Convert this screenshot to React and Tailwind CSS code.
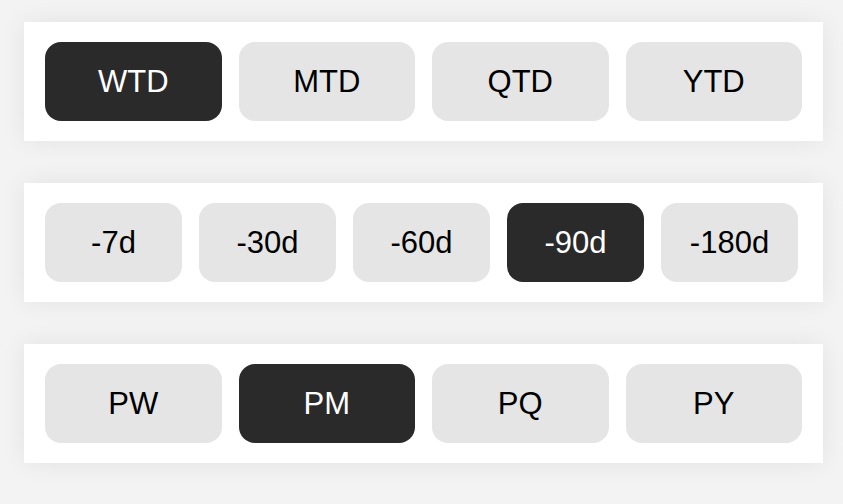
import { useState } from 'react';

const grupos = [
  { opciones: ['WTD', 'MTD', 'QTD', 'YTD'], activo: 'WTD', fijo: false },
  { opciones: ['-7d', '-30d', '-60d', '-90d', '-180d'], activo: '-90d', fijo: true },
  { opciones: ['PW', 'PM', 'PQ', 'PY'], activo: 'PM', fijo: false },
];

function Grupo({ opciones, inicial, fijo }) {
  const [activo, setActivo] = useState(inicial);

  return (
    <div className="bg-white shadow-[0_0_24px_rgba(0,0,0,0.07)] h-[119px] px-[21px] flex items-center gap-[17px]">
      {opciones.map(op => (
        <button
          key={op}
          onClick={() => setActivo(op)}
          className={`h-[79px] rounded-[16px] text-[31px] leading-none ${fijo ? 'w-[137px]' : 'flex-1'} ${
            activo === op ? 'bg-[#2a2a2a] text-white' : 'bg-[#e5e5e5] text-black'
          }`}
        >
          {op}
        </button>
      ))}
    </div>
  );
}

export default function App() {
  return (
    <div className="min-h-[504px] bg-[#f3f3f3] pt-[22px] pl-[24px] pr-[20px] pb-[41px] flex flex-col gap-[42px] font-['Liberation_Sans',Arial,sans-serif]">
      {grupos.map((g, i) => (
        <Grupo key={i} opciones={g.opciones} inicial={g.activo} fijo={g.fijo} />
      ))}
    </div>
  );
}
